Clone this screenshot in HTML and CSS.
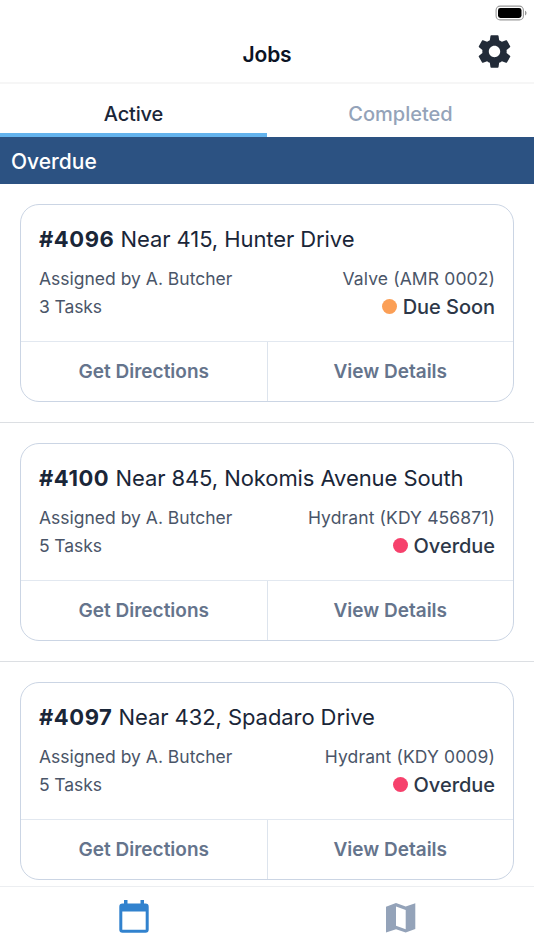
FILE: index.html
```html
<!DOCTYPE html>
<html lang="en">
<head>
<meta charset="utf-8">
<title>Jobs</title>
<link rel="stylesheet" href="styles.css">
</head>
<body>
<div class="app">
  <div class="status">
    <svg width="32" height="16" viewBox="0 0 32 16"><rect x="1.1" y="1.1" width="27.3" height="13.8" rx="4" fill="#fff" stroke="#999" stroke-width="1.1"/><rect x="3" y="3" width="23.5" height="10" rx="2.4" fill="#000"/><path d="M30 5.700c2 .7 2 4 0 4.700z" fill="#999"/></svg>
  </div>
  <header class="header">
    <h1 class="title">Jobs</h1>
    <svg class="gear" width="39" height="39" viewBox="0 0 24 24"><path fill="#222b38" d="M19.430 12.980c.04-.32.070-.64.070-.98s-.03-.66-.07-.98l2.110-1.650c.19-.15.240-.42.120-.64l-2-3.460c-.12-.22-.39-.3-.61-.22l-2.490 1c-.52-.4-1.080-.73-1.690-.98l-.38-2.650C14.460 2.180 14.250 2 14 2h-4c-.25 0-.46.18-.49.42l-.38 2.650c-.61.25-1.170.59-1.690.98l-2.490-1c-.23-.09-.49 0-.61.22l-2 3.460c-.13.22-.07.49.12.64l2.110 1.650c-.04.32-.07.65-.07.98s.03.66.07.98l-2.110 1.650c-.19.15-.24.42-.12.64l2 3.460c.12.22.39.3.61.22l2.490-1c.52.4 1.080.73 1.690.98l.38 2.650c.03.24.24.42.49.42h4c.25 0 .46-.18.49-.42l.38-2.650c.61-.25 1.170-.59 1.690-.98l2.490 1c.23.09.49 0 .61-.22l2-3.460c.12-.22.07-.49-.12-.64l-2.110-1.650zM12 15.500c-1.930 0-3.500-1.570-3.500-3.500s1.570-3.500 3.500-3.500 3.500 1.570 3.500 3.500-1.570 3.500-3.500 3.500z"/></svg>
  </header>
  <nav class="tabs">
    <div class="tab active"><span class="t-active">Active</span></div>
    <div class="tab"><span>Completed</span></div>
  </nav>
  <h2 class="section"><span>Overdue</span></h2>
  <main class="list">
    <div class="item"><article class="card">
      <div class="info">
        <div class="name"><b>#4096</b> <span>Near 415, Hunter Drive</span></div>
        <div class="row meta"><span>Assigned by A. Butcher</span><span class="asset">Valve (AMR 0002)</span></div>
        <div class="row meta"><span class="tasks">3 Tasks</span><span class="state"><i class="dot soon"></i><span>Due Soon</span></span></div>
      </div>
      <div class="actions"><div><span>Get Directions</span></div><div><span>View Details</span></div></div>
    </article></div>
    <div class="item"><article class="card">
      <div class="info">
        <div class="name"><b>#4100</b> <span>Near 845, Nokomis Avenue South</span></div>
        <div class="row meta"><span>Assigned by A. Butcher</span><span class="asset">Hydrant (KDY 456871)</span></div>
        <div class="row meta"><span class="tasks">5 Tasks</span><span class="state"><i class="dot"></i><span>Overdue</span></span></div>
      </div>
      <div class="actions"><div><span>Get Directions</span></div><div><span>View Details</span></div></div>
    </article></div>
    <div class="item"><article class="card">
      <div class="info">
        <div class="name"><b>#4097</b> <span>Near 432, Spadaro Drive</span></div>
        <div class="row meta"><span>Assigned by A. Butcher</span><span class="asset">Hydrant (KDY 0009)</span></div>
        <div class="row meta"><span class="tasks">5 Tasks</span><span class="state"><i class="dot"></i><span>Overdue</span></span></div>
      </div>
      <div class="actions"><div><span>Get Directions</span></div><div><span>View Details</span></div></div>
    </article></div>
  </main>
  <footer class="bottom">
    <div><svg width="30" height="33" viewBox="0 0 30 33"><path fill="#3182ce" fill-rule="evenodd" d="M5 0h3.500v3.500h13V0H25v3.500h1.500Q29.700 3.500 29.700 6.700v22.800q0 3.200-3.200 3.200h-23Q.3 32.700.3 29.500V6.700Q.3 3.500 3.500 3.500H5zM3.300 11.500v18.200h23.400V11.500z"/></svg></div>
    <div><svg width="30" height="30" viewBox="0 0 30 30"><path fill="#94a3b9" fill-rule="evenodd" d="M0 3.700 10 0l9.700 3.400L29.300.2v25.800L19.700 29.600 10 26.200 0 29.500zM10 3.500v19.300l9.700 3.400V6.900z"/></svg></div>
  </footer>
</div>
</body>
</html>
```
FILE: styles.css
```css
* { box-sizing: border-box; }
body { margin: 0; background: #fff; font-family: Inter, "Liberation Sans", sans-serif; color: #1a202c; }
.app { height: 950px; display: flex; flex-direction: column; overflow: hidden; }
.status { height: 26px; padding: 5px 7px 0 0; display: flex; justify-content: flex-end; flex: none; }
.header { height: 58px; flex: none; display: grid; grid-template-columns: 60px 1fr 60px; border-bottom: 2px solid #f6f6f6; }
.title { grid-column: 2; margin: 0; text-align: center; font-size: 21px; font-weight: 600; line-height: 58px; color: #0b1324; letter-spacing: -.2px; }
.gear { margin: 5.500px 0 0 1px; }
.tabs { height: 53px; flex: none; display: flex; }
.tab { flex: 1; text-align: center; font-size: 20px; font-weight: 450; line-height: 60px; color: #94a3b9; border-bottom: 4px solid transparent; height: 53px; }
.tab.active { color: #1a2638; border-color: #63b3ed; }
.t-active { letter-spacing: -.15px; }
.section { margin: 0; height: 47px; flex: none; background: #2c5282; color: #fff; font-size: 21px; font-weight: 450; line-height: 49px; padding-left: 11px; }
.list { flex: 1; min-height: 0; overflow: hidden; }
.item { height: 239px; padding: 20px 20px 0; border-bottom: 1px solid #dcdfe3; }
.card { height: 198px; border: 1px solid #cbd5e4; border-radius: 19px; display: flex; flex-direction: column; }
.info { flex: 1; padding: 17px 18px 0; }
.name { font-size: 22px; line-height: 35px; margin-bottom: 8px; white-space: nowrap; color: #1a2638; }
.name b { font-weight: 700; letter-spacing: .55px; }
.name span { letter-spacing: -.08px; }
.row { display: flex; justify-content: space-between; }
.meta { font-size: 17.500px; line-height: 28px; color: #4a5568; white-space: nowrap; }
.asset { letter-spacing: .12px; }
.tasks { letter-spacing: -.1px; }
.state { display: flex; align-items: center; gap: 5.500px; color: #2d3748; font-size: 20px; font-weight: 500; letter-spacing: -.04px; }
.dot { width: 15.500px; height: 15.500px; margin-top: -1px; border-radius: 50%; background: #f6416c; }
.dot.soon { background: #fb9f56; }
.actions { height: 60.500px; display: flex; border-top: 1px solid #e2e8f0; }
.actions div { flex: 1; text-align: center; font-size: 19px; font-weight: 600; line-height: 59px; color: #65748c; }
.actions div + div { border-left: 1px solid #dde4ed; }
.bottom { height: 64px; flex: none; border-top: 1px solid #eceef1; display: flex; }
.bottom div { flex: 1; padding-top: 13px; text-align: center; }
.bottom div + div { padding-top: 16px; }
```
